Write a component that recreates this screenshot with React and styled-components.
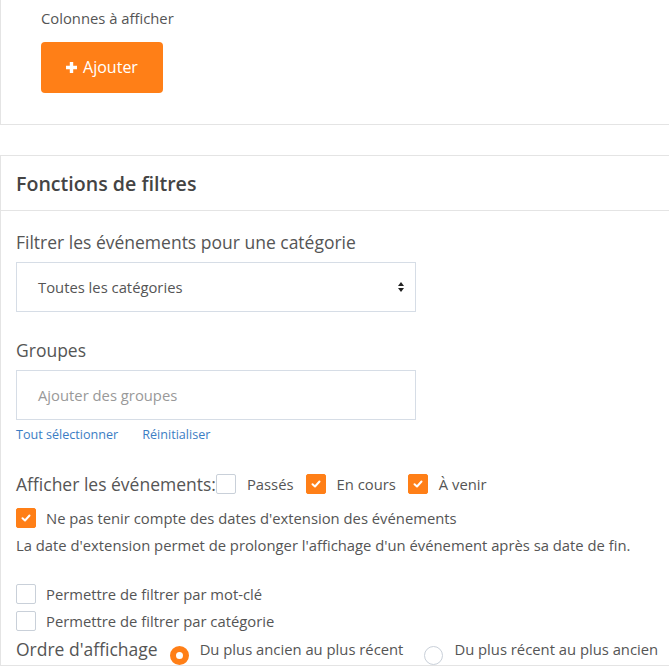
import React from "react";
import styled, { createGlobalStyle } from "styled-components";

const Global = createGlobalStyle`
  html, body { margin: 0; padding: 0; background: #fff; }
  body { font-family: "Open Sans", "Noto Sans", sans-serif; color: #555; overflow: hidden; }
  * { box-sizing: border-box; }
`;

const Page = styled.div`
  width: 669px;
  height: 672px;
  overflow: hidden;
`;

const Card = styled.section`
  border: 1px solid #e4e4e4;
  border-right: none;
  border-top: ${(p) => (p.$noTop ? "none" : "1px solid #e4e4e4")};
  margin-bottom: 30px;
  background: #fff;
`;

const TopBody = styled.div`
  padding: 8px 0 31px 40px;
`;

const SmallLabel = styled.div`
  font-size: 14.8px;
  line-height: 20px;
  color: #555;
`;

const AddButton = styled.button`
  margin-top: 14px;
  width: 122px;
  height: 51px;
  border: none;
  border-radius: 4px;
  background: #ff7f17;
  color: #fff;
  font-family: inherit;
  font-size: 16px;
  display: flex;
  align-items: center;
  justify-content: center;
  gap: 6px;
  padding: 0 0 1px;
`;

const CardHeader = styled.div`
  padding: 0 15px;
  height: 55px;
  display: flex;
  align-items: center;
  border-bottom: 1px solid #e4e4e4;
  font-family: "Open Sans", sans-serif;
  font-weight: 600;
  font-size: 19.6px;
  color: #444;
`;

const CardBody = styled.div`
  padding: 20px 15px 0;
`;

const FieldLabel = styled.div`
  font-size: 17.5px;
  line-height: 22px;
  color: #555;
  white-space: nowrap;
  flex: none;
  margin-top: ${(p) => p.$mt || 0}px;
  margin-right: ${(p) => p.$mr || 0}px;
`;

const Box = styled.div`
  width: 400px;
  height: 50px;
  margin-top: 9px;
  border: 1px solid #d6dde6;
  display: flex;
  align-items: center;
  justify-content: space-between;
  padding: 0 10px 0 21px;
  font-size: 14.8px;
  color: ${(p) => (p.$placeholder ? "#999" : "#555")};
`;

const Links = styled.div`
  display: flex;
  gap: 24px;
  margin-top: 7px;
  font-size: 12.6px;
  line-height: 16px;
  color: #3b7dc4;
`;

const Inline = styled.div`
  display: flex;
  align-items: center;
  margin-top: ${(p) => p.$mt || 0}px;
  gap: ${(p) => p.$gap ?? 10}px;
  white-space: nowrap;
`;

const CheckGroup = styled.div`
  display: flex;
  align-items: center;
`;

const Opt = styled.span`
  font-size: 14.8px;
  color: #555;
  margin: 0 12px 0 11px;
`;

const CheckRow = styled.div`
  display: flex;
  align-items: center;
  gap: 10px;
  margin-top: ${(p) => p.$mt || 0}px;
  font-size: 14.8px;
  line-height: 20px;
  color: #555;
  white-space: nowrap;
`;

const Help = styled.div`
  margin-top: 7px;
  font-size: 14.8px;
  line-height: 20px;
  color: #555;
  white-space: nowrap;
`;

const CheckBox = styled.span`
  width: 20px;
  height: 20px;
  flex: none;
  border-radius: 2px;
  border: 1px solid ${(p) => (p.$on ? "#ff7f17" : "#c9d0d9")};
  background: ${(p) => (p.$on ? "#ff7f17" : "#fff")};
  display: inline-flex;
  align-items: center;
  justify-content: center;
`;

const Radio = styled.span`
  width: 19px;
  height: 19px;
  flex: none;
  border-radius: 50%;
  border: ${(p) => (p.$on ? "6px solid #ff7f17" : "1px solid #c9d0d9")};
  background: #fff;
  margin-top: 13px;
`;

const RadioLabel = styled.span`
  font-size: 14.8px;
  color: #555;
  flex: none;
  margin-right: ${(p) => p.$mr || 0}px;
`;

const Check = ({ on }) => (
  <CheckBox $on={on}>
    {on && (
      <svg width="10" height="8" viewBox="0 0 10 8">
        <path d="M1.5 4.2 L4 6.5 L8.5 1.5" fill="none" stroke="#fff" strokeWidth="2" strokeLinecap="round" strokeLinejoin="round" />
      </svg>
    )}
  </CheckBox>
);

export default function App() {
  return (
    <Page>
      <Global />
      <Card $noTop>
        <TopBody>
          <SmallLabel>Colonnes à afficher</SmallLabel>
          <AddButton>
            <svg width="11" height="11" viewBox="0 0 11 11">
              <path d="M5.5 0 V11 M0 5.5 H11" stroke="#fff" strokeWidth="3.4" />
            </svg>
            Ajouter
          </AddButton>
        </TopBody>
      </Card>
      <Card>
        <CardHeader>Fonctions de filtres</CardHeader>
        <CardBody>
          <FieldLabel>Filtrer les événements pour une catégorie</FieldLabel>
          <Box>
            <span>Toutes les catégories</span>
            <svg width="8" height="14" viewBox="0 0 8 14">
              <path d="M4 2 L7 6 H1 Z M4 12 L7 8 H1 Z" fill="#222" />
            </svg>
          </Box>
          <FieldLabel $mt={27}>Groupes</FieldLabel>
          <Box $placeholder>
            <span>Ajouter des groupes</span>
          </Box>
          <Links>
            <span>Tout sélectionner</span>
            <span>Réinitialiser</span>
          </Links>
          <Inline $mt={30} $gap={0}>
            <FieldLabel>Afficher les événements:</FieldLabel>
            <CheckGroup>
              <Check on={false} />
              <Opt>Passés</Opt>
              <Check on />
              <Opt>En cours</Opt>
              <Check on />
              <Opt>À venir</Opt>
            </CheckGroup>
          </Inline>
          <CheckRow $mt={13}>
            <Check on />
            Ne pas tenir compte des dates d'extension des événements
          </CheckRow>
          <Help>La date d'extension permet de prolonger l'affichage d'un événement après sa date de fin.</Help>
          <CheckRow $mt={29}>
            <Check on={false} />
            Permettre de filtrer par mot-clé
          </CheckRow>
          <CheckRow $mt={7}>
            <Check on={false} />
            Permettre de filtrer par catégorie
          </CheckRow>
          <Inline $mt={2} $gap={11}>
            <FieldLabel $mr={1}>Ordre d'affichage</FieldLabel>
            <Radio $on />
            <RadioLabel $mr={10}>Du plus ancien au plus récent</RadioLabel>
            <Radio />
            <RadioLabel>Du plus récent au plus ancien</RadioLabel>
          </Inline>
        </CardBody>
      </Card>
    </Page>
  );
}
